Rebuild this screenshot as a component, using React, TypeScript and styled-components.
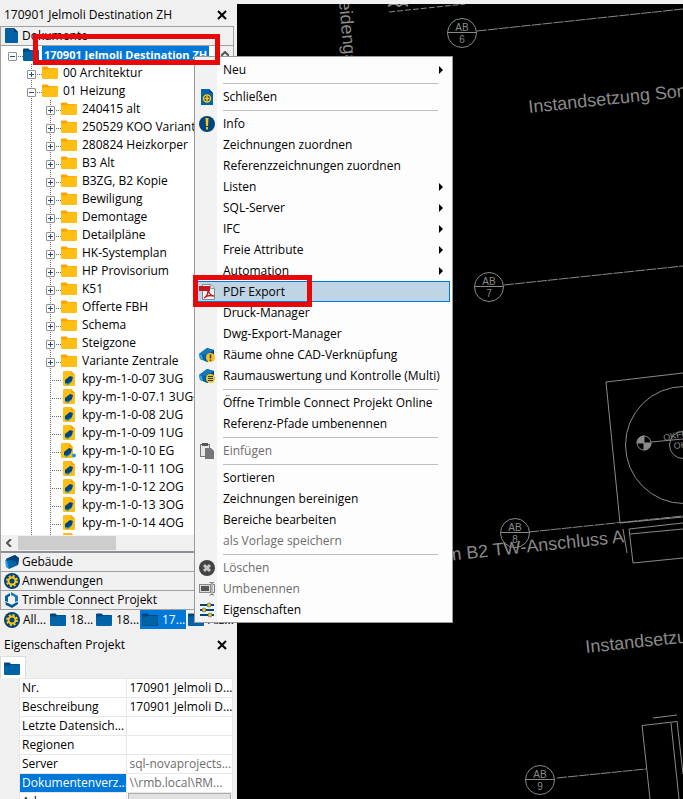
import React from 'react';
import styled, { createGlobalStyle, css } from 'styled-components';

const GlobalStyle = createGlobalStyle`
  * { box-sizing: border-box; }
  body {
    margin: 0;
    background: #f0f0f0;
    color: #000;
    font-family: "Open Sans", "Noto Sans", sans-serif;
    font-size: 12px;
    line-height: 18px;
  }
  button {
    font: inherit;
    color: inherit;
    margin: 0;
    padding: 0;
    border: 0;
    background: none;
    text-align: left;
  }
  ul { list-style: none; margin: 0; padding: 0; }
  svg { display: block; flex: none; }
`;

/* ---------- icons ---------- */

const FolderIcon = ({ blue = false, outline = false }: { blue?: boolean; outline?: boolean }) => (
  <svg width="16" height="16" viewBox="0 0 16 16" aria-hidden="true">
    <path d="M0 2.500Q0 1.500 1 1.500H5.500L7 3H15Q16 3 16 4V8H0Z" fill={blue ? '#00457c' : '#ffa200'} />
    <path d="M0 4.500H5.500L7 3.500H15.500Q16 3.500 16 4V13Q16 14 15 14H1Q0 14 0 13Z" fill={blue ? '#0063a8' : '#ffbe14'} />
    {outline && <path d="M.5 2H5.500L7 3.500H15.500V13.500H.5Z" fill="none" stroke="#003c72" strokeDasharray="1 1" />}
  </svg>
);

const FileIcon = () => (
  <svg width="16" height="18" viewBox="0 0 16 18" aria-hidden="true">
    <path d="M1 2Q1 1 2 1H10L14 5V15Q14 16 13 16H2Q1 16 1 15Z" fill="#0060a4" />
    <path d="M10 1L14 5H10Z" fill="#003f74" />
  </svg>
);

const DrawingIcon = ({ marked = false }: { marked?: boolean }) => (
  <svg width="16" height="16" viewBox="0 0 16 16" aria-hidden="true">
    <path d={marked ? 'M0 1Q0 0 1 0H8L12 4V15H1Q0 15 0 14Z' : 'M2 1Q2 0 3 0H10L14 4V14Q14 15 13 15H3Q2 15 2 14Z'} fill="#ffbe14" />
    <path d={marked ? 'M8 0L12 4H8Z' : 'M10 0L14 4H10Z'} fill="#ffa200" />
    <g transform={marked ? 'translate(-1 0)' : undefined}>
      <path d="M4 9L9 5L12 6L11 10L7 13L4 12Z" fill="#00457c" />
      <path d="M7 13L11 10L11 11L7 14L4 13V12Z" fill="#1ba0e0" />
    </g>
    {marked && <circle cx="13" cy="12.500" r="2" fill="#1996e0" />}
  </svg>
);

const Cube = () => (
  <>
    <path d="M0 7L8 1L15 3L15 10L8 15L1 12Z" fill="#0063a8" />
    <path d="M0 7L8 1L15 3L9 8Z" fill="#1678b8" />
    <path d="M9 8L15 3V10L8 15Z" fill="#00457c" />
    <path d="M0 7L3 8L4 13L1 12Z" fill="#29a3dc" />
  </>
);

const BuildingIcon = () => (
  <svg width="16" height="16" viewBox="0 0 16 16" aria-hidden="true">
    <path d="M2 5L11 1L15 4L14 11L5 15L2 12Z" fill="#0063a8" />
    <path d="M11 1L15 4L14 11L11 7L2 5Z" fill="#003f74" />
    <path d="M1 6L3 7L5 15L2 13Z" fill="#29a3dc" />
  </svg>
);

const GearIcon = () => (
  <svg width="16" height="16" viewBox="0 0 16 16" aria-hidden="true">
    <circle cx="8" cy="8" r="8" fill="#00457c" />
    <circle cx="8" cy="8" r="3.500" fill="none" stroke="#ffc61a" strokeWidth="2" />
    <circle cx="8" cy="8" r="5" fill="none" stroke="#ffc61a" strokeWidth="2" strokeDasharray="2 1.930" />
  </svg>
);

const TrimbleIcon = () => (
  <svg width="16" height="16" viewBox="0 0 16 16" aria-hidden="true">
    <path d="M6 1V4L4 5V10L1 9V4Z" fill="#0063a8" />
    <path d="M7 0L14 4V9L11 10V5L7 3Z" fill="#1a78b8" />
    <path d="M1 10L4 11L8 13L11 11L14 10V12L8 16L2 13Z" fill="#00578f" />
  </svg>
);

const CloseDocIcon = () => (
  <svg width="16" height="16" viewBox="0 0 16 16" aria-hidden="true">
    <path d="M2 0H10L14 4V16H2Z" fill="#0063a8" />
    <path d="M10 0L14 4H10Z" fill="#00457c" />
    <circle cx="8" cy="9.500" r="3.500" fill="#00457c" stroke="#ffc61a" strokeWidth="1.500" />
    <path d="M8 7V12M5.500 9.500H10.500" stroke="#ffc61a" strokeWidth="1.500" />
  </svg>
);

const InfoIcon = () => (
  <svg width="16" height="16" viewBox="0 0 16 16" aria-hidden="true">
    <circle cx="8" cy="8" r="8" fill="#00457c" />
    <path d="M6.500 2H9.500L9 10H7Z" fill="#ffc61a" />
    <rect x="7" y="11" width="2" height="2.500" fill="#ffc61a" />
  </svg>
);

const PdfIcon = () => (
  <svg width="16" height="16" viewBox="0 0 16 16" aria-hidden="true">
    <path d="M3.500 .5H12L15.500 4V15.500H3.500Z" fill="#f4f4f4" stroke="#888" />
    <path d="M11.500 .5V4.500H15.500" fill="#ddd" stroke="#999" />
    <rect x="0" y="2" width="11" height="5" fill="#c01820" />
    <path d="M9 6C10 9 12 12 15 12M9 6C9 10 7 13 5 14M5 14C8 11 11 11 15 12" fill="none" stroke="#c01820" strokeWidth="1.300" />
  </svg>
);

const RoomWarnIcon = () => (
  <svg width="16" height="16" viewBox="0 0 16 16" aria-hidden="true">
    <Cube />
    <circle cx="11.500" cy="10.500" r="4.500" fill="#ffbe14" />
    <path d="M11.500 7.500V11.500M11.500 12.500V14" stroke="#00457c" strokeWidth="1.500" />
  </svg>
);

const RoomListIcon = () => (
  <svg width="16" height="16" viewBox="0 0 16 16" aria-hidden="true">
    <Cube />
    <circle cx="11.500" cy="10.500" r="4.500" fill="#ffbe14" />
    <path d="M9 8.500H14M9 10.500H14M9 12.500H14" stroke="#00457c" />
  </svg>
);

const PasteIcon = () => (
  <svg width="16" height="16" viewBox="0 0 16 16" aria-hidden="true">
    <rect x="1.500" y="1.500" width="9" height="12" fill="#e8e8e8" stroke="#777" />
    <rect x="3" y="0" width="6" height="3" fill="#555" />
    <path d="M6 5H12L15 8V16H6Z" fill="#777" />
  </svg>
);

const DeleteIcon = () => (
  <svg width="16" height="16" viewBox="0 0 16 16" aria-hidden="true">
    <circle cx="8" cy="8" r="8" fill="#444" />
    <path d="M5 5L11 11M11 5L5 11" stroke="#c4c4c4" strokeWidth="3" />
  </svg>
);

const RenameIcon = () => (
  <svg width="16" height="16" viewBox="0 0 16 16" aria-hidden="true">
    <rect x=".5" y="3.500" width="11" height="8" fill="#ddd" stroke="#888" />
    <rect x="2" y="5" width="8" height="5" fill="#555" />
    <path d="M10.500 1.500H12.500L13 2.500L13.500 1.500H15M13 2V13M10.500 14H12L13 13L14 14H15M14 3.500H15.500V11.500H14" fill="none" stroke="#777" />
  </svg>
);

const SlidersIcon = () => (
  <svg width="16" height="16" viewBox="0 0 16 16" aria-hidden="true">
    <path d="M1 3H15M1 8H15M1 13H15" stroke="#00457c" strokeWidth="2" />
    <circle cx="10" cy="3" r="2" fill="#ffc61a" stroke="#00457c" strokeWidth=".5" />
    <circle cx="5" cy="8" r="2" fill="#ffc61a" stroke="#00457c" strokeWidth=".5" />
    <circle cx="11" cy="13" r="2" fill="#ffc61a" stroke="#00457c" strokeWidth=".5" />
  </svg>
);

const CrossIcon = () => (
  <svg width="10" height="10" viewBox="0 0 10 10" aria-hidden="true">
    <path d="M1 1L9 9M9 1L1 9" stroke="#000" strokeWidth="2" />
  </svg>
);

const ArrowIcon = () => (
  <svg width="4" height="8" viewBox="0 0 4 8" aria-hidden="true">
    <path d="M0 0L4 4L0 8Z" fill="#000" />
  </svg>
);

/* ---------- shell ---------- */

const Window = styled.div`
  display: grid;
  grid-template-columns: 237px minmax(0, 1fr);
  height: 100vh;
  overflow: hidden;
`;

const Sidebar = styled.aside`
  display: flex;
  flex-direction: column;
  min-height: 0;
  background: #f0f0f0;
`;

const PanelTitle = styled.header`
  display: flex;
  align-items: center;
  justify-content: space-between;
  flex: none;
  height: 26px;
  padding: 4px 10px 0 4px;
`;

const CloseButton = styled.button`
  display: grid;
  place-items: center;
`;

const Sections = styled.section`
  display: flex;
  flex-direction: column;
  flex: 1;
  min-height: 0;
  margin-right: 3px;
  border: solid #a0a0a0;
  border-width: 1px 1px 0 1px;
`;

const SectionButton = styled.button`
  display: flex;
  align-items: center;
  gap: 2px;
  flex: none;
  height: 19px;
  padding-left: 3px;
  border-bottom: 1px solid #a0a0a0;
`;

const TreePane = styled.div`
  display: grid;
  grid-template: minmax(0, 1fr) 16px / minmax(0, 1fr) 16px;
  flex: 1;
  min-height: 0;
  background: #fff;
  border-bottom: 2px solid #8c8f98;
`;

const TreeList = styled.ul`
  overflow: hidden;
`;

const VerticalBar = styled.div`
  display: flex;
  justify-content: center;
  padding-top: 5px;
  background: #f0f0f0;
`;

const HorizontalBar = styled.div`
  grid-column: 1 / -1;
  display: flex;
  align-items: center;
  gap: 6px;
  padding: 1px 0 1px 5px;
  background: #f0f0f0;
`;

const Thumb = styled.span`
  width: 98px;
  height: 14px;
  background: #cdcdcd;
`;

/* ---------- tree ---------- */

const dotsDown = 'linear-gradient(#6a6a6a 50%, transparent 50%) 0 0 / 1px 2px repeat-y';
const dotsAcross = 'linear-gradient(90deg, #6a6a6a 50%, transparent 50%) 0 10px / 2px 1px repeat-x';

const TreeRow = styled.li`
  display: flex;
  align-items: center;
  height: 18px;
  white-space: nowrap;
`;

const Indent = styled.span`
  flex: none;
  width: 30px;
`;

const GuideLine = styled.span`
  flex: none;
  align-self: stretch;
  width: 19px;
  background: ${dotsDown};
`;

const Branch = styled.span<{ $root: boolean }>`
  display: flex;
  align-items: center;
  flex: none;
  align-self: stretch;
  width: ${p => (p.$root ? 11 : 11)}px;
  margin-left: ${p => (p.$root ? 11 : 0)}px;
  background: ${p => (p.$root ? dotsAcross : `${dotsDown}, ${dotsAcross}`)};
`;

const Toggle = styled.button`
  display: grid;
  place-items: center;
  flex: none;
  width: 9px;
  height: 9px;
  margin: 3px 0 0 -4px;
  border: 1px solid #919191;
  border-radius: 1px;
  background: #fff;
`;

const NodeLabel = styled.span<{ $selected?: boolean }>`
  padding: 0 2px;
  margin-left: 3px;
  ${p => p.$selected && css`
    background: #0078d7;
    color: #fff;
    font-size: 11px;
    font-weight: 700;
  `}
`;

type Node = { label: string; level: number; kind: 'root' | 'folder' | 'file' | 'marked'; open?: boolean };

const folders = ['240415 alt', '250529 KOO Variante', '280824 Heizkorper', 'B3 Alt', 'B3ZG, B2 Kopie', 'Bewiligung', 'Demontage',
  'Detailpläne', 'HK-Systemplan', 'HP Provisorium', 'K51', 'Offerte FBH', 'Schema', 'Steigzone', 'Variante Zentrale'];
const files = ['07 3UG', '07.1 3UG-', '08 2UG', '09 1UG', '10 EG', '11 1OG', '12 2OG', '13 3OG', '14 4OG', '15 5OG'];

const nodes: Node[] = [
  { label: '170901 Jelmoli Destination ZH', level: 0, kind: 'root', open: true },
  { label: '00 Architektur', level: 1, kind: 'folder' },
  { label: '01 Heizung', level: 1, kind: 'folder', open: true },
  ...folders.map((label): Node => ({ label, level: 2, kind: 'folder' })),
  ...files.map((f): Node => ({ label: `kpy-m-1-0-${f}`, level: 2, kind: f === '10 EG' ? 'marked' : 'file' })),
];

const TreeNode = ({ node }: { node: Node }) => {
  const isFile = node.kind === 'file' || node.kind === 'marked';
  return (
    <TreeRow>
      {node.level > 0 && <Indent />}
      {node.level > 1 && <GuideLine />}
      <Branch $root={node.level === 0}>
        {!isFile && (
          <Toggle aria-label={node.open ? 'Zuklappen' : 'Aufklappen'}>
            <svg width="5" height="5" viewBox="0 0 5 5" aria-hidden="true">
              <path d={node.open ? 'M0 2.500H5' : 'M0 2.500H5M2.500 0V5'} stroke="#2a4a90" />
            </svg>
          </Toggle>
        )}
      </Branch>
      {isFile ? <DrawingIcon marked={node.kind === 'marked'} /> : <FolderIcon blue={node.kind === 'root'} />}
      <NodeLabel $selected={node.kind === 'root'}>{node.label}</NodeLabel>
    </TreeRow>
  );
};

/* ---------- project tabs ---------- */

const ProjectTabs = styled.nav`
  display: flex;
  flex: none;
  height: 20px;
  overflow: hidden;
`;

const ProjectTab = styled.button<{ $active?: boolean }>`
  display: flex;
  align-items: center;
  gap: 4px;
  flex: none;
  width: 46px;
  height: 19px;
  padding-left: 2px;
  white-space: nowrap;
  ${p => p.$active && css`
    background: #0078d7;
    color: #fff;
  `}
`;

const AllTab = styled(ProjectTab)`
  width: 48px;
  padding-left: 4px;
  gap: 3px;
`;

/* ---------- properties ---------- */

const Properties = styled.section`
  flex: none;
  height: 169px;
  overflow: hidden;
`;

const PropertyTab = styled.button`
  display: block;
  width: 26px;
  height: 22px;
  padding: 2px 0 0 3px;
  border: 1px solid #dcdcdc;
  border-width: 1px 1px 0 1px;
  background: #fff;
`;

const PropertyTable = styled.table`
  width: 214px;
  margin-left: 19px;
  table-layout: fixed;
  border-collapse: collapse;
  background: #fff;
`;

const PropertyCell = styled.td<{ $muted?: boolean }>`
  height: 19px;
  padding: 0 0 0 3px;
  border: solid #e8e8e8;
  border-width: 1px 1px 0 1px;
  line-height: 18px;
  white-space: nowrap;
  overflow: hidden;
  color: ${p => (p.$muted ? '#6d6d6d' : 'inherit')};
`;

const PropertyName = styled(PropertyCell).attrs({ as: 'th', scope: 'row' })<{ $selected?: boolean }>`
  padding-left: 2px;
  font-weight: 400;
  text-align: left;
  ${p => p.$selected && css`
    background: #0078d7;
    color: #fff;
  `}
`;

const ValueButton = styled.button`
  display: block;
  width: 103px;
  height: 18px;
  margin-left: -2px;
  border: 1px solid #adadad;
  background: #e1e1e1;
`;

type Property = { name: string; value: string; muted?: boolean; selected?: boolean; button?: boolean };
const properties: Property[] = [
  { name: 'Nr.', value: '170901 Jelmoli D...' },
  { name: 'Beschreibung', value: '170901 Jelmoli D...' },
  { name: 'Letzte Datensich...', value: '' },
  { name: 'Regionen', value: '' },
  { name: 'Server', value: 'sql-novaprojects...', muted: true },
  { name: 'Dokumentenverz...', value: '\\\\rmb.local\\RM...', muted: true, selected: true },
  { name: 'Adresse', value: '', button: true },
];

/* ---------- drawing canvas ---------- */

const Workspace = styled.main`
  min-width: 0;
  min-height: 0;
  border-top: 4px solid #f0f0f0;
  background: #000;
`;

const Drawing = styled.svg`
  width: 100%;
  height: 100%;
  fill: none;
  stroke: #8a8a8a;
  text {
    fill: #8a8a8a;
    stroke: none;
    font-family: "Liberation Sans", Arial, sans-serif;
  }
`;

const Marker = ({ x, y, n }: { x: number; y: number; n: number }) => (
  <g>
    <circle cx={x} cy={y} r="14.500" />
    <path d={`M${x - 14} ${y - .5}H${x + 14}`} />
    <text x={x} y={y - 2} fontSize="10" textAnchor="middle">AB</text>
    <text x={x} y={y + 10} fontSize="10" textAnchor="middle">{n}</text>
  </g>
);

const Plan = () => (
  <Drawing role="img" aria-label="Grundriss">
    <g transform="translate(-237 -4)">
      <Marker x={462} y={33} n={6} />
      <Marker x={489} y={287} n={7} />
      <Marker x={515} y={533} n={8} />
      <Marker x={540} y={780} n={9} />
      <path d="M477 31L683 9M504 285L683 266M529 532L683 516M557 778L646 769" strokeDasharray="10 1" />
      <path d="M389 12L465 4" strokeDasharray="6 2" />
      <path d="M388 6L394 3L399 6L404 3L408 6" strokeWidth="2" />
      <text transform="translate(339 1) rotate(85)" fontSize="18">eidengasse</text>
      <text transform="translate(529 113) rotate(-6)" fontSize="18">Instandsetzung Sondernutzung</text>
      <text transform="translate(586 653) rotate(-6)" fontSize="18">Instandsetzung Sondernutzung</text>
      <text transform="translate(447 561) rotate(-6)" fontSize="18">m B2 TW-Anschluss A</text>
      <path d="M683 373L606 382L620 523L683 517" />
      <circle cx="684" cy="445" r="58.500" />
      <circle cx="644" cy="443" r="7" />
      <path d="M644 443V436A7 7 0 0 0 637 443ZM644 443V450A7 7 0 0 0 651 443Z" fill="#8a8a8a" />
      <path d="M651 442L683 439" />
      <path d="M683 523L629 529L633 563L683 558M683 529L630 534M623 529L627 553" />
      <circle cx="683" cy="445" r="13.500" />
      <text transform="translate(664 441) rotate(-12)" fontSize="9">OKFB</text>
      <text transform="translate(674 449) rotate(-6)" fontSize="9">OK</text>
      <path d="M642 725.500L677 721.500M653 718L677 715M642 725L650 799M671 723L679 799M677 721L683 774" />
    </g>
  </Drawing>
);

/* ---------- context menu ---------- */

const ContextMenu = styled.ul`
  position: absolute;
  top: 56px;
  left: 194px;
  width: 259px;
  padding: 2px;
  border: 1px solid #999;
  background: linear-gradient(90deg, #f2f2f2 22px, #fdfdfd 22px);
`;

const MenuButton = styled.button<{ $active?: boolean }>`
  display: grid;
  grid-template-columns: 24px minmax(0, 1fr) auto;
  align-items: center;
  width: 100%;
  height: 21px;
  padding: 0 6px 0 1px;
  border: 1px solid ${p => (p.$active ? '#0078d7' : 'transparent')};
  background: ${p => (p.$active ? '#bfd4e4' : 'transparent')};
  white-space: nowrap;
  &:disabled { color: #6d6d6d; }
`;

const MenuIcon = styled.span`
  display: block;
  width: 16px;
`;

const Separator = styled.li`
  height: 6px;
  margin: 0 12px 0 26px;
  padding-top: 3px;
  &::before {
    content: "";
    display: block;
    height: 1px;
    background: #bdbdbd;
  }
`;

type Item = { label: string; icon?: React.ReactNode; sub?: boolean; active?: boolean; disabled?: boolean };
const menuGroups: Item[][] = [
  [{ label: 'Neu', sub: true }],
  [{ label: 'Schließen', icon: <CloseDocIcon /> }],
  [
    { label: 'Info', icon: <InfoIcon /> },
    { label: 'Zeichnungen zuordnen' },
    { label: 'Referenzzeichnungen zuordnen' },
    { label: 'Listen', sub: true },
    { label: 'SQL-Server', sub: true },
    { label: 'IFC', sub: true },
    { label: 'Freie Attribute', sub: true },
    { label: 'Automation', sub: true },
    { label: 'PDF Export', icon: <PdfIcon />, active: true },
    { label: 'Druck-Manager' },
    { label: 'Dwg-Export-Manager' },
    { label: 'Räume ohne CAD-Verknüpfung', icon: <RoomWarnIcon /> },
    { label: 'Raumauswertung und Kontrolle (Multi)', icon: <RoomListIcon /> },
  ],
  [{ label: 'Öffne Trimble Connect Projekt Online' }, { label: 'Referenz-Pfade umbenennen' }],
  [{ label: 'Einfügen', icon: <PasteIcon />, disabled: true }],
  [
    { label: 'Sortieren' },
    { label: 'Zeichnungen bereinigen' },
    { label: 'Bereiche bearbeiten' },
    { label: 'als Vorlage speichern', disabled: true },
  ],
  [
    { label: 'Löschen', icon: <DeleteIcon />, disabled: true },
    { label: 'Umbenennen', icon: <RenameIcon />, disabled: true },
    { label: 'Eigenschaften', icon: <SlidersIcon /> },
  ],
];

const Highlight = styled.div<{ $x: number; $y: number; $w: number; $h: number }>`
  position: absolute;
  left: ${p => p.$x}px;
  top: ${p => p.$y}px;
  width: ${p => p.$w}px;
  height: ${p => p.$h}px;
  border: 5px solid #e80808;
  pointer-events: none;
`;

export default function App() {
  return (
    <>
      <GlobalStyle />
      <Window>
        <Sidebar>
          <PanelTitle>
            <span>170901 Jelmoli Destination ZH</span>
            <CloseButton aria-label="Schließen"><CrossIcon /></CloseButton>
          </PanelTitle>
          <Sections>
            <SectionButton><FileIcon />Dokumente</SectionButton>
            <TreePane>
              <TreeList>
                {nodes.map(node => <TreeNode key={node.label} node={node} />)}
              </TreeList>
              <VerticalBar>
                <svg width="8" height="6" viewBox="0 0 8 6" aria-hidden="true"><path d="M0 5L4 1L8 5" fill="none" stroke="#555" strokeWidth="2" /></svg>
              </VerticalBar>
              <HorizontalBar>
                <svg width="6" height="8" viewBox="0 0 6 8" aria-hidden="true"><path d="M5 0L1 4L5 8" fill="none" stroke="#555" strokeWidth="2" /></svg>
                <Thumb />
              </HorizontalBar>
            </TreePane>
            <SectionButton><BuildingIcon />Gebäude</SectionButton>
            <SectionButton><GearIcon />Anwendungen</SectionButton>
            <SectionButton><TrimbleIcon />Trimble Connect Projekt</SectionButton>
          </Sections>
          <ProjectTabs>
            <AllTab><GearIcon />All...</AllTab>
            <ProjectTab><FolderIcon blue />18...</ProjectTab>
            <ProjectTab><FolderIcon blue />18...</ProjectTab>
            <ProjectTab $active><FolderIcon blue outline />17...</ProjectTab>
            <ProjectTab><FolderIcon blue />A.z...</ProjectTab>
          </ProjectTabs>
          <Properties>
            <PanelTitle>
              <span>Eigenschaften Projekt</span>
              <CloseButton aria-label="Schließen"><CrossIcon /></CloseButton>
            </PanelTitle>
            <PropertyTab aria-label="Projekt"><FolderIcon blue /></PropertyTab>
            <PropertyTable>
              <tbody>
                {properties.map(p => (
                  <tr key={p.name}>
                    <PropertyName $selected={p.selected}>{p.name}</PropertyName>
                    <PropertyCell $muted={p.muted}>{p.button ? <ValueButton aria-label={p.name} /> : p.value}</PropertyCell>
                  </tr>
                ))}
              </tbody>
            </PropertyTable>
          </Properties>
        </Sidebar>
        <Workspace><Plan /></Workspace>
      </Window>
      <ContextMenu>
        {menuGroups.map((group, g) => (
          <React.Fragment key={g}>
            {g > 0 && <Separator role="separator" />}
            {group.map(item => (
              <li key={item.label}>
                <MenuButton $active={item.active} disabled={item.disabled}>
                  <MenuIcon>{item.icon}</MenuIcon>
                  <span>{item.label}</span>
                  {item.sub && <ArrowIcon />}
                </MenuButton>
              </li>
            ))}
          </React.Fragment>
        ))}
      </ContextMenu>
      <Highlight $x={33} $y={34} $w={187} $h={31} />
      <Highlight $x={193} $y={275} $w={119} $h={32} />
    </>
  );
}
